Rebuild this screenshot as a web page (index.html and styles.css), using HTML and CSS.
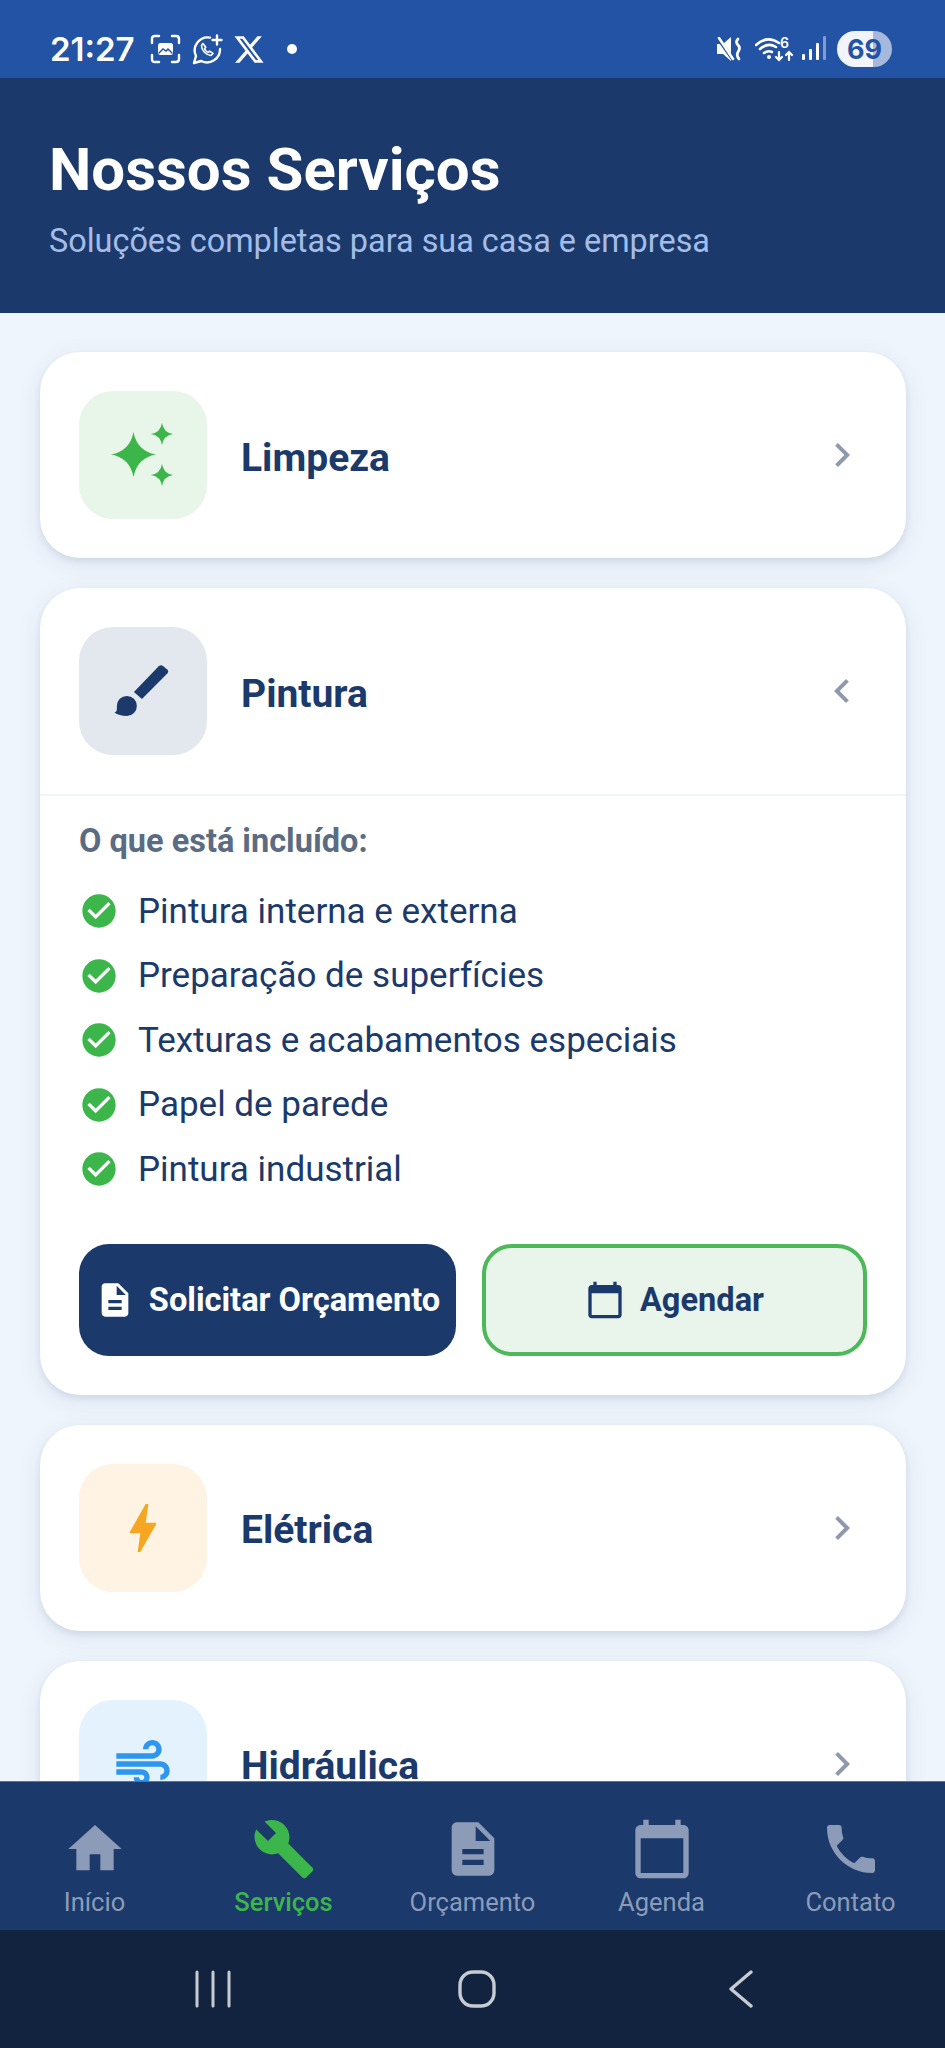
FILE: index.html
```html
<!DOCTYPE html>
<html lang="pt-BR">
<head>
    <meta charset="UTF-8">
    <meta name="viewport" content="width=device-width, initial-scale=1.0">
    <title>Nossos Serviços</title>
    <link rel="stylesheet" href="styles.css">
</head>
<body>
    <div class="app">
        <div class="status-bar">
            <div class="status-left">
                <span class="time">21:27</span>
                <svg class="st-shot" viewBox="0 0 31 30" fill="none" stroke="#fff" stroke-width="2.4" stroke-linecap="round">
                    <path d="M2 9V5q0-3 3-3h4M22 2h4q3 0 3 3v4M29 21v4q0 3-3 3h-4M9 28H5q-3 0-3-3v-4"/>
                    <rect x="8" y="9" width="15" height="12" rx="2.5" fill="#fff" stroke="none"/>
                    <path d="M9 19l4-4 3 2 2-2 4 4" stroke="#2353a5" stroke-width="1.4" fill="none"/>
                </svg>
                <svg class="st-wa" viewBox="0 0 31 31" fill="none" stroke="#fff" stroke-width="2.4" stroke-linecap="round" stroke-linejoin="round">
                    <path d="M18 3.600A13 13 0 0 0 4 22L2 29l7.200-2A13 13 0 0 0 28 15"/>
                    <path d="M25 1.500v9M20.500 6h9"/>
                    <path d="M11 9.500l-1.500 2c0 5 4 9 9.500 10l2-2-3.400-2.400-1.600 1.300c-1.500-.7-3-2.200-3.500-3.700l1.300-1.500z" stroke-width="1.600"/>
                </svg>
                <svg class="st-x" viewBox="1 2 22 20"><path fill="#fff" d="M18.244 2.250h3.308l-7.227 8.260 8.502 11.240H16.170l-5.214-6.817L4.990 21.750H1.680l7.730-8.835L1.254 2.250H8.080l4.713 6.231zm-1.161 17.520h1.833L7.084 4.126H5.117z"/></svg>
                <span class="st-dot"></span>
            </div>
            <div class="status-right">
                <svg class="st-mute" viewBox="0 0 26 24" fill="none">
                    <path fill="#fff" d="M0 7h6l8-7v24l-8-7H0z"/>
                    <path d="M0 0l17 24" stroke="#2353a5" stroke-width="3.600"/>
                    <path d="M2 1l14 21" stroke="#fff" stroke-width="2.600" stroke-linecap="round"/>
                    <path d="M21 2q-3 3 0 6t0 7q-2 3 1 7" stroke="#fff" stroke-width="2.800" stroke-linecap="round"/>
                </svg>
                <div class="st-wifi">
                    <svg viewBox="0 0 40 26" fill="none" stroke="#fff" stroke-linecap="round">
                        <path d="M1 9q11-10 23-2M5 13q8-7 16-2M9 17q4-3 8-1" stroke-width="2.600"/>
                        <circle cx="14" cy="21" r="2" fill="#fff" stroke="none"/>
                        <path d="M24 16v8M21 21l3 3 3-3M34 24v-8M31 19l3-3 3 3" stroke-width="2.200"/>
                    </svg>
                    <span class="st-wifi-num">6</span>
                </div>
                <svg class="st-signal" viewBox="0 0 24 26">
                    <rect x="0" y="18" width="3" height="6" rx="1" fill="#fff"/>
                    <rect x="7" y="13" width="3" height="11" rx="1" fill="#fff"/>
                    <rect x="14" y="7" width="3" height="17" rx="1" fill="#fff"/>
                    <rect x="21" y="0" width="3" height="24" rx="1" fill="#7f9bd0"/>
                </svg>
                <div class="battery"><span>69</span></div>
            </div>
        </div>

        <header class="page-header">
            <h1>Nossos Serviços</h1>
            <p>Soluções completas para sua casa e empresa</p>
        </header>

        <main class="content">
            <section class="card">
                <div class="card-head">
                    <div class="card-icon bg-green">
                        <svg viewBox="0 0 64 64" fill="#3cb54a">
                            <path d="M22.500 9Q26 28 45 31.500 26 35 22.500 54 19 35 0 31.500 19 28 22.500 9z"/>
                            <path d="M51 0Q52.500 9.500 62 11 52.500 12.500 51 22 49.500 12.500 40 11 49.500 9.500 51 0z"/>
                            <path d="M51 41Q52.500 50.500 62 52 52.500 53.500 51 63 49.500 53.500 40 52 49.500 50.500 51 41z"/>
                        </svg>
                    </div>
                    <h2>Limpeza</h2>
                    <svg class="chevron" viewBox="0 0 24 24"><path d="M10 6L8.590 7.410 13.170 12l-4.580 4.590L10 18l6-6z"/></svg>
                </div>
            </section>

            <section class="card">
                <div class="card-head">
                    <div class="card-icon bg-grey">
                        <svg viewBox="0 0 24 24" fill="#1b3a6b">
                            <path d="M8.600 12.400L17.900 2.700q.8-.7 1.600-.1l1.600 1.300q.7.7 0 1.500L11.600 15z"/>
                            <path d="M1.200 20c1.200-.1 1-1.200 1-2.400a3.750 3.750 0 1 1 3.750 3.750c-1.800 0-3.600-.4-4.750-1.350z"/>
                        </svg>
                    </div>
                    <h2>Pintura</h2>
                    <svg class="chevron" viewBox="0 0 24 24"><path d="M15.410 7.410L14 6l-6 6 6 6 1.410-1.410L10.830 12z"/></svg>
                </div>
                <div class="card-body">
                    <h3>O que está incluído:</h3>
                    <ul class="includes">
                        <li><svg viewBox="0 0 24 24"><path d="M12 2C6.480 2 2 6.480 2 12s4.480 10 10 10 10-4.480 10-10S17.520 2 12 2zm-2 15l-5-5 1.410-1.410L10 14.170l7.590-7.590L19 8l-9 9z"/></svg>Pintura interna e externa</li>
                        <li><svg viewBox="0 0 24 24"><path d="M12 2C6.480 2 2 6.480 2 12s4.480 10 10 10 10-4.480 10-10S17.520 2 12 2zm-2 15l-5-5 1.410-1.410L10 14.170l7.590-7.590L19 8l-9 9z"/></svg>Preparação de superfícies</li>
                        <li><svg viewBox="0 0 24 24"><path d="M12 2C6.480 2 2 6.480 2 12s4.480 10 10 10 10-4.480 10-10S17.520 2 12 2zm-2 15l-5-5 1.410-1.410L10 14.170l7.590-7.590L19 8l-9 9z"/></svg>Texturas e acabamentos especiais</li>
                        <li><svg viewBox="0 0 24 24"><path d="M12 2C6.480 2 2 6.480 2 12s4.480 10 10 10 10-4.480 10-10S17.520 2 12 2zm-2 15l-5-5 1.410-1.410L10 14.170l7.590-7.590L19 8l-9 9z"/></svg>Papel de parede</li>
                        <li><svg viewBox="0 0 24 24"><path d="M12 2C6.480 2 2 6.480 2 12s4.480 10 10 10 10-4.480 10-10S17.520 2 12 2zm-2 15l-5-5 1.410-1.410L10 14.170l7.590-7.590L19 8l-9 9z"/></svg>Pintura industrial</li>
                    </ul>
                    <div class="actions">
                        <button class="btn btn-primary">
                            <svg viewBox="0 0 24 24"><path d="M14 2H6c-1.100 0-1.990.9-1.990 2L4 20c0 1.100.89 2 1.990 2H18c1.100 0 2-.9 2-2V8l-6-6zm2 16H8v-2h8v2zm0-4H8v-2h8v2zm-3-5V3.500L18.500 9H13z"/></svg>
                            Solicitar Orçamento
                        </button>
                        <button class="btn btn-outline">
                            <svg viewBox="0 0 24 24"><path d="M20 3h-1V1h-2v2H7V1H5v2H4c-1.100 0-2 .9-2 2v16c0 1.100.9 2 2 2h16c1.100 0 2-.9 2-2V5c0-1.100-.9-2-2-2zm0 18H4V8h16v13z"/></svg>
                            Agendar
                        </button>
                    </div>
                </div>
            </section>

            <section class="card">
                <div class="card-head">
                    <div class="card-icon bg-orange">
                        <svg viewBox="0 0 24 24" fill="#f5a623"><path d="M11 21h-1l1-7H7.500c-.58 0-.57-.32-.38-.66.19-.34.05-.08.07-.12C8.480 10.940 10.420 7.540 13 3h1l-1 7h3.500c.49 0 .56.33.47.51l-.07.15C12.960 17.550 11 21 11 21z"/></svg>
                    </div>
                    <h2>Elétrica</h2>
                    <svg class="chevron" viewBox="0 0 24 24"><path d="M10 6L8.590 7.410 13.170 12l-4.580 4.590L10 18l6-6z"/></svg>
                </div>
            </section>

            <section class="card">
                <div class="card-head">
                    <div class="card-icon bg-blue">
                        <svg viewBox="0 0 24 24" fill="#2f96ee"><path d="M14.500 17c0 1.650-1.350 3-3 3s-3-1.350-3-3h2c0 .55.45 1 1 1s1-.45 1-1-.45-1-1-1H2v-2h9.500c1.650 0 3 1.350 3 3zM19 6.500C19 4.570 17.430 3 15.500 3S12 4.570 12 6.500h2c0-.83.67-1.500 1.500-1.500s1.500.67 1.500 1.500S16.330 8 15.500 8H2v2h13.500c1.930 0 3.500-1.570 3.500-3.500zm-.5 4.500H2v2h16.500c.83 0 1.500.67 1.500 1.500s-.67 1.500-1.500 1.500v2c1.930 0 3.500-1.570 3.500-3.500S20.430 11 18.500 11z"/></svg>
                    </div>
                    <h2>Hidráulica</h2>
                    <svg class="chevron" viewBox="0 0 24 24"><path d="M10 6L8.590 7.410 13.170 12l-4.580 4.590L10 18l6-6z"/></svg>
                </div>
            </section>
        </main>

        <nav class="bottom-nav">
            <a class="nav-item">
                <svg viewBox="0 0 24 24"><path d="M10 20v-6h4v6h5v-8h3L12 3 2 12h3v8z"/></svg>
                <span>Início</span>
            </a>
            <a class="nav-item active">
                <svg viewBox="0 0 24 24"><path d="M22.700 19l-9.100-9.100c.9-2.300.4-5-1.500-6.900-2-2-5-2.400-7.400-1.300L9 6 6 9 1.600 4.700C.4 7.100.9 10.100 2.900 12.100c1.900 1.900 4.600 2.400 6.900 1.500l9.100 9.100c.4.4 1 .4 1.400 0l2.300-2.300c.5-.4.5-1.100.1-1.400z"/></svg>
                <span>Serviços</span>
            </a>
            <a class="nav-item">
                <svg viewBox="0 0 24 24"><path d="M14 2H6c-1.100 0-1.990.9-1.990 2L4 20c0 1.100.89 2 1.990 2H18c1.100 0 2-.9 2-2V8l-6-6zm2 16H8v-2h8v2zm0-4H8v-2h8v2zm-3-5V3.500L18.500 9H13z"/></svg>
                <span>Orçamento</span>
            </a>
            <a class="nav-item">
                <svg viewBox="0 0 24 24"><path d="M20 3h-1V1h-2v2H7V1H5v2H4c-1.100 0-2 .9-2 2v16c0 1.100.9 2 2 2h16c1.100 0 2-.9 2-2V5c0-1.100-.9-2-2-2zm0 18H4V8h16v13z"/></svg>
                <span>Agenda</span>
            </a>
            <a class="nav-item">
                <svg viewBox="0 0 24 24"><path d="M6.620 10.790c1.440 2.830 3.760 5.140 6.590 6.590l2.200-2.200c.27-.27.67-.36 1.020-.24 1.120.37 2.330.57 3.570.57.55 0 1 .45 1 1V20c0 .55-.45 1-1 1-9.390 0-17-7.610-17-17 0-.55.45-1 1-1h3.500c.55 0 1 .45 1 1 0 1.250.2 2.450.57 3.570.11.35.03.74-.25 1.020l-2.200 2.200z"/></svg>
                <span>Contato</span>
            </a>
        </nav>

        <div class="system-nav">
            <svg viewBox="0 0 36 38" fill="none" stroke="#c6cbd4" stroke-width="3" stroke-linecap="round"><path d="M2 2v34M18 2v34M34 2v34"/></svg>
            <svg viewBox="0 0 38 38" fill="none" stroke="#c6cbd4" stroke-width="3.400"><rect x="2" y="2" width="34" height="34" rx="13"/></svg>
            <svg viewBox="0 0 26 38" fill="none" stroke="#c6cbd4" stroke-width="3.400" stroke-linecap="round" stroke-linejoin="round"><path d="M23 2L3 19l20 17"/></svg>
        </div>
    </div>
</body>
</html>
```

FILE: styles.css
```css
* {
    box-sizing: border-box;
    margin: 0;
    padding: 0;
}
body {
    background: #eff5fc;
    font-family: Roboto, 'Liberation Sans', sans-serif;
    color: #1b3a6b;
}
.app {
    width: 945px;
    height: 2048px;
    display: flex;
    flex-direction: column;
    overflow: hidden;
}

/* status bar */
.status-bar {
    height: 78px;
    flex: none;
    background: #2353a5;
    display: flex;
    align-items: center;
    justify-content: space-between;
    padding: 20px 53px 0 50px;
    color: #fff;
}
.status-left, .status-right {
    display: flex;
    align-items: center;
}
.time {
    font-family: Inter, Roboto, sans-serif;
    font-weight: 600;
    font-size: 33px;
    width: 100px;
}
.st-shot { width: 31px; height: 30px; }
.st-wa { width: 31px; height: 31px; margin-left: 11px; }
.st-x { width: 30px; height: 27px; margin-left: 11px; }
.st-dot {
    width: 10px;
    height: 10px;
    border-radius: 50%;
    background: #fff;
    margin-left: 23px;
}
.st-mute { width: 26px; height: 24px; }
.st-wifi {
    width: 40px;
    height: 26px;
    margin-left: 12px;
    position: relative;
}
.st-wifi svg {
    display: block;
    width: 40px;
    height: 26px;
}
.st-wifi-num {
    position: absolute;
    left: 25px;
    top: 0;
    font-family: Inter, Roboto, sans-serif;
    font-size: 14px;
    line-height: 14px;
    font-weight: 600;
}
.st-signal { width: 24px; height: 26px; margin-left: 7px; }
.battery {
    width: 55px;
    height: 36px;
    margin-left: 11px;
    border-radius: 18px;
    background: linear-gradient(to right, #f1f4fa 65%, #a6b9dc 65%);
    display: flex;
    align-items: center;
    justify-content: center;
    color: #2353a5;
    font-family: Inter, Roboto, sans-serif;
    font-weight: 700;
    font-size: 27px;
}

/* header */
.page-header {
    height: 235px;
    flex: none;
    background: #1b3a6b;
    padding: 54px 49px 0;
}
.page-header h1 {
    font-size: 60px;
    font-weight: 700;
    line-height: 76px;
    color: #fff;
}
.page-header p {
    font-size: 32.400px;
    line-height: 40px;
    margin-top: 13px;
    color: #a4bde8;
}

/* service cards */
.content {
    flex: 1;
    min-height: 0;
    overflow: hidden;
    padding: 39px 39px 0 40px;
    display: flex;
    flex-direction: column;
    gap: 30px;
}
.card {
    flex: none;
    background: #fff;
    border-radius: 40px;
    box-shadow: 0 3px 6px rgba(27,58,107,0.09), 0 6px 24px rgba(27,58,107,0.09);
}
.card-head {
    display: flex;
    align-items: center;
    height: 206px;
    padding: 0 40px 0 39px;
}
.card-icon {
    width: 128px;
    height: 128px;
    border-radius: 34px;
    display: flex;
    align-items: center;
    justify-content: center;
    flex: none;
}
.card-icon svg {
    width: 64px;
    height: 64px;
}
.bg-green { background: #e8f5e9; }
.bg-grey { background: #e3e7ee; }
.bg-orange { background: #fff3e3; }
.bg-blue { background: #e3f2fd; }
.card-head h2 {
    flex: 1;
    margin-left: 34px;
    font-size: 39px;
    line-height: 50px;
    padding-top: 5px;
    font-weight: 700;
    color: #1b3a6b;
}
.chevron {
    width: 48px;
    height: 48px;
    flex: none;
    fill: #8e99ae;
}
.card-body {
    border-top: 2px solid #f1f4f9;
    padding: 25px 39px 39px;
}
.card-body h3 {
    font-size: 32.500px;
    line-height: 40px;
    font-weight: 700;
    color: #5b6b82;
    margin-bottom: 18px;
}
.includes {
    list-style: none;
}
.includes li {
    display: flex;
    align-items: center;
    height: 64.500px;
    font-size: 35px;
    color: #1b3a6b;
}
.includes svg {
    width: 40px;
    height: 40px;
    fill: #3cb54a;
    margin-right: 19px;
    flex: none;
}
.actions {
    display: flex;
    gap: 26px;
    margin-top: 42px;
}
.btn {
    height: 112px;
    border-radius: 30px;
    display: flex;
    align-items: center;
    justify-content: center;
    font-family: Roboto, sans-serif;
    font-size: 32.600px;
    font-weight: 700;
    border: none;
    white-space: nowrap;
}
.btn svg {
    width: 40px;
    height: 40px;
    fill: currentColor;
    flex: none;
}
.btn-primary {
    width: 377px;
    background: #1b3a6b;
    color: #fff;
    gap: 14px;
}
.btn-outline {
    flex: 1;
    background: #e9f5ea;
    color: #1b3a6b;
    border: 4px solid #4cb85a;
    gap: 15px;
}

/* bottom navigation */
.bottom-nav {
    height: 149px;
    flex: none;
    background: #1b3a6b;
    border-top: 1px solid #5e7294;
    display: grid;
    grid-template-columns: repeat(5, 1fr);
    position: relative;
}
.nav-item {
    display: flex;
    flex-direction: column;
    align-items: center;
    padding-top: 35px;
    color: #8c9cb8;
}
.nav-item svg {
    width: 64px;
    height: 64px;
    fill: currentColor;
}
.nav-item span {
    font-size: 25.500px;
    line-height: 32px;
    font-weight: 400;
    margin-top: 5px;
}
.nav-item.active span {
    font-weight: 500;
}
.nav-item.active {
    color: #3cb54a;
}

/* android navigation */
.system-nav {
    height: 118px;
    flex: none;
    background: #12233f;
    display: grid;
    grid-template-columns: repeat(3, 264px);
    justify-content: center;
    justify-items: center;
    align-items: center;
    padding-left: 8px;
}
.system-nav svg {
    height: 38px;
    width: auto;
}
.system-nav svg:nth-child(1) { width: 36px; }
.system-nav svg:nth-child(2) { width: 38px; }
.system-nav svg:nth-child(3) { width: 26px; }
```
